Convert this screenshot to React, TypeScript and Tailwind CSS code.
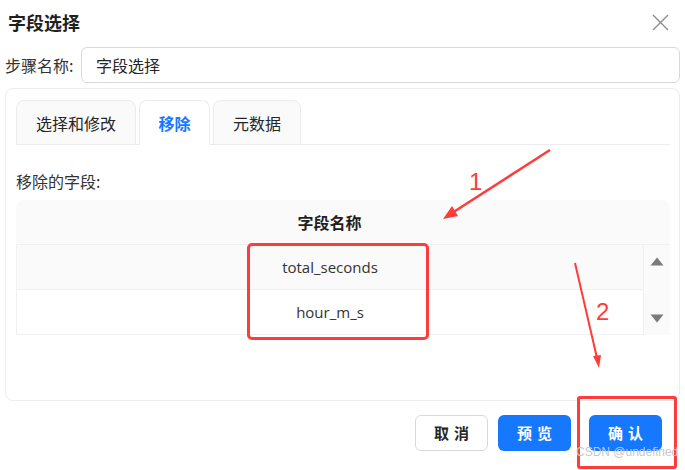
import React from "react";

const cjk = '"Noto Sans CJK SC", "Noto Sans", sans-serif';

export default function App() {
  return (
    <div
      className="relative w-[685px] h-[470px] overflow-hidden bg-white text-[#262626]"
      style={{ fontFamily: cjk }}
    >
      {/* Title */}
      <div className="h-[44px] flex items-center justify-between pl-[8px] pr-[16px]">
        <div className="text-[18px] font-bold leading-none text-[#1f1f1f]">字段选择</div>
        <svg width="17" height="17" viewBox="0 0 17 17" className="text-[#8c8c8c]">
          <path d="M1 1 L16 16 M16 1 L1 16" stroke="currentColor" strokeWidth="1.4" fill="none" />
        </svg>
      </div>
      {/* Step name */}
      <div className="mt-[3px] flex items-center pl-[5px] pr-[5px] h-[36px]">
        <div className="w-[76px] text-[16px] text-[#333]">步骤名称:</div>
        <div className="flex-1 h-[36px] rounded-[6px] border border-[#d9d9d9] flex items-center pl-[14px] text-[16px] text-[#262626]">
          字段选择
        </div>
      </div>
      {/* Panel */}
      <div className="mt-[5px] mx-[5px] h-[313px] rounded-[8px] border border-[#ececec] pl-[10px] pr-[9px] pt-[10px]">
        {/* Tabs */}
        <div className="flex items-end gap-[3px] border-b border-[#ececec] h-[46px]">
          <div className="w-[120px] h-[45px] -mb-px rounded-t-[8px] border border-[#ececec] bg-[#fafafa] flex items-center justify-center text-[16px] text-[#262626]">
            选择和修改
          </div>
          <div className="w-[71px] h-[45px] -mb-px rounded-t-[8px] border border-[#ececec] border-b-white bg-white flex items-center justify-center text-[16px] font-bold text-[#1677ff]">
            移除
          </div>
          <div className="w-[88px] h-[45px] -mb-px rounded-t-[8px] border border-[#ececec] bg-[#fafafa] flex items-center justify-center text-[16px] text-[#262626]">
            元数据
          </div>
        </div>
        <div className="mt-[26px] text-[16px] leading-[20px] text-[#333]">移除的字段:</div>
        {/* Table */}
        <div className="mt-[9px] w-[654px] rounded-t-[8px] overflow-hidden">
          <div className="h-[45px] bg-[#fafafa] border-b border-[#f0f0f0] flex items-center justify-center pr-[27px] text-[16px] font-bold text-[#1f1f1f]">
            字段名称
          </div>
          <div className="flex">
            <div className="flex-1 border-l border-[#f0f0f0]" style={{ fontFamily: '"Open Sans", "Noto Sans", sans-serif' }}>
              <div className="h-[45px] bg-[#fafafa] border-b border-[#f0f0f0] flex items-center justify-center text-[15px] text-[#333]">
                total_seconds
              </div>
              <div className="h-[45px] bg-white border-b border-[#f0f0f0] flex items-center justify-center text-[15px] text-[#333]">
                hour_m_s
              </div>
            </div>
            <div className="w-[27px] h-[90px] bg-[#fafafa] border-l border-[#f0f0f0] flex flex-col items-center justify-between py-[12px]">
              <svg width="14" height="9" viewBox="0 0 14 9">
                <path d="M7 0.5 L13.5 8.5 L0.5 8.5 Z" fill="#7a7a7a" />
              </svg>
              <svg width="14" height="9" viewBox="0 0 14 9">
                <path d="M0.5 0.5 L13.5 0.5 L7 8.5 Z" fill="#7a7a7a" />
              </svg>
            </div>
          </div>
        </div>
      </div>
      {/* Buttons */}
      <div className="mt-[14px] flex justify-end gap-[10px] pr-[23px]">
        <div className="w-[73px] h-[36px] rounded-[6px] border border-[#d9d9d9] bg-white flex items-center justify-center text-[15px] font-bold tracking-[5px] pl-[5px] text-[#262626]">
          取消
        </div>
        <div className="w-[73px] h-[36px] rounded-[6px] bg-[#1677ff] flex items-center justify-center text-[15px] font-bold tracking-[5px] pl-[5px] text-white">
          预览
        </div>
        <div className="ml-[8px] w-[73px] h-[36px] rounded-[6px] bg-[#1677ff] flex items-center justify-center text-[15px] font-bold tracking-[5px] pl-[5px] text-white">
          确认
        </div>
      </div>

      {/* Annotations */}
      <div className="absolute left-[247px] top-[243px] w-[182px] h-[97px] rounded-[5px] border-[3px] border-[#ff3b3b]" />
      <div className="absolute left-[577px] top-[396px] w-[100px] h-[73px] rounded-[3px] border-[3px] border-[#ff3b3b]" />
      <svg className="absolute left-0 top-0 pointer-events-none" width="685" height="470" viewBox="0 0 685 470">
        <path d="M550 150 L452 213" stroke="#ff3b3b" strokeWidth="2.5" fill="none" />
        <path d="M443 219 L452 206 L458 216 Z" fill="#ff3b3b" />
        <path d="M575 263 L597 358" stroke="#ff3b3b" strokeWidth="2" fill="none" />
        <path d="M599 368 L593 356 L601 355 Z" fill="#ff3b3b" />
      </svg>
      <div className="absolute left-[469px] top-[170px] text-[24px] leading-none text-[#ff3b3b]" style={{ fontFamily: '"Liberation Sans", sans-serif' }}>1</div>
      <div className="absolute left-[596px] top-[300px] text-[24px] leading-none text-[#ff3b3b]" style={{ fontFamily: '"Liberation Sans", sans-serif' }}>2</div>
      <div className="absolute left-[576px] top-[446px] text-[12px] leading-none text-[#c8c8c8]" style={{ fontFamily: '"Liberation Sans", sans-serif' }}>CSDN @undefined</div>
    </div>
  );
}
